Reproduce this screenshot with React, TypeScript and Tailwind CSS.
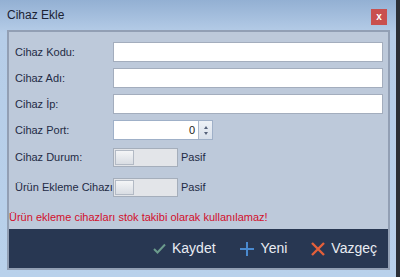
import React from 'react';

const font = { fontFamily: '"Liberation Sans", Arial, sans-serif' };

const Label: React.FC<{ text: string }> = ({ text }) => (
  <span className="w-[98px] shrink-0 text-[11px] text-[#1f2b45] whitespace-nowrap">{text}</span>
);

const TextRow: React.FC<{ label: string; className?: string }> = ({ label, className }) => (
  <div className={`flex items-center ${className ?? ''}`}>
    <Label text={label} />
    <div className="h-[20px] w-[270px] bg-white border border-[#a3adbd]" />
  </div>
);

const Toggle: React.FC<{ label: string; className?: string }> = ({ label, className }) => (
  <div className={`flex items-center ${className ?? ''}`}>
    <Label text={label} />
    <div className="h-[19px] w-[65px] bg-[#e3e5e9] border border-[#a5aebb] p-[1px] flex">
      <div className="w-[19px] h-full bg-gradient-to-b from-[#f4f5f7] to-[#d9dde3] border border-[#b3bac5]" />
    </div>
    <span className="ml-[3px] text-[11px] text-[#1f2b45]">Pasif</span>
  </div>
);

export default function App() {
  return (
    <div className="w-[400px] h-[277px] flex bg-[#2b2f36] overflow-hidden" style={font}>
      <div className="w-[396px] h-full flex flex-col bg-gradient-to-b from-[#93b0d3] via-[#b6cde8] via-[12%] to-[#b9d1eb]">
        <div className="h-[30px] flex items-center justify-between pl-[7px] pr-[9px] shrink-0">
          <span className="text-[12px] text-[#1b2233]">Cihaz Ekle</span>
          <div className="w-[16px] h-[16px] bg-[#c9504f] flex items-center justify-center mt-[4px]">
            <span className="text-white text-[10px] font-bold leading-none">x</span>
          </div>
        </div>
        <div className="ml-[7px] w-[383px] h-[240px] border-2 border-[#929fb4] bg-[#bdc9da] flex flex-col">
          <div className="flex flex-col pl-[6px] pt-[10px]">
            <TextRow label="Cihaz Kodu:" />
            <TextRow label="Cihaz Adı:" className="mt-[6px]" />
            <TextRow label="Cihaz İp:" className="mt-[6px]" />
            <div className="flex items-center mt-[6px]">
              <Label text="Cihaz Port:" />
              <div className="h-[20px] w-[100px] flex border border-[#9fb0c8] bg-white">
                <div className="flex-1 text-right pr-[3px] text-[11px] text-[#1b1b1b] leading-[18px]">0</div>
                <div className="w-[14px] border-l border-[#a9b7cc] bg-gradient-to-b from-[#eef2f7] to-[#d8e0eb] flex flex-col items-center justify-center gap-[3px]">
                  <div className="w-0 h-0 border-l-[2.5px] border-r-[2.5px] border-b-[3px] border-l-transparent border-r-transparent border-b-[#56627a]" />
                  <div className="w-0 h-0 border-l-[2.5px] border-r-[2.5px] border-t-[3px] border-l-transparent border-r-transparent border-t-[#56627a]" />
                </div>
              </div>
            </div>
            <Toggle label="Cihaz Durum:" className="mt-[8px]" />
            <Toggle label="Ürün Ekleme Cihazı:" className="mt-[11px]" />
          </div>
          <div className="mt-[12px] text-[11px] text-[#d2102c]">
            Ürün ekleme cihazları stok takibi olarak kullanılamaz!
          </div>
          <div className="mt-auto h-[39px] bg-[#283752] flex items-center justify-end pr-[11px] gap-[24px] text-[14px] text-[#e8ecf3]">
            <div className="flex items-center gap-[6px]">
              <svg width="13" height="11" viewBox="0 0 13 11">
                <path d="M1 6 L4.5 9.5 L12 1.5" fill="none" stroke="#6b9b8c" strokeWidth="2" />
              </svg>
              <span>Kaydet</span>
            </div>
            <div className="flex items-center gap-[7px]">
              <svg width="14" height="14" viewBox="0 0 14 14">
                <path d="M7 0 V14 M0 7 H14" stroke="#4a8ad0" strokeWidth="2" />
              </svg>
              <span>Yeni</span>
            </div>
            <div className="flex items-center gap-[6px]">
              <svg width="14" height="14" viewBox="0 0 14 14">
                <path d="M1 1 L13 13 M13 1 L1 13" stroke="#e4603a" strokeWidth="2.4" />
              </svg>
              <span>Vazgeç</span>
            </div>
          </div>
        </div>
      </div>
    </div>
  );
}
